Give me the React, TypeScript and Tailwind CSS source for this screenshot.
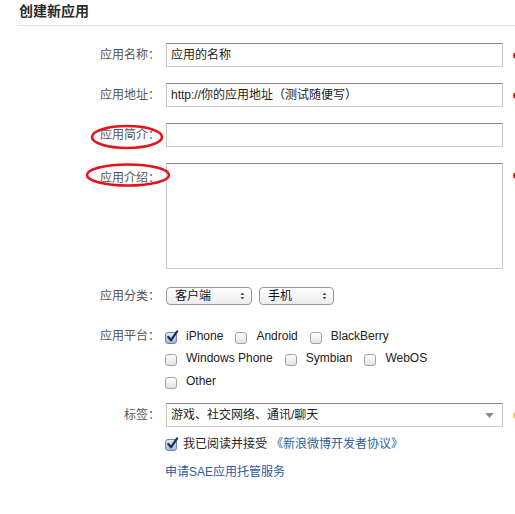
import React from "react";

const font = { fontFamily: '"Liberation Sans", "Noto Sans CJK SC", sans-serif' };

function Box({ checked = false }: { checked?: boolean }) {
  if (checked) {
    return (
      <span className="relative inline-block w-[12px] h-[12px] rounded-[3px] border border-[#6f86a8] bg-gradient-to-b from-[#dfeaf8] to-[#9fb9dc] shrink-0">
        <svg viewBox="0 0 14 14" className="absolute left-[0px] top-[-3px] w-[13px] h-[13px]">
          <path d="M2.5 7.5 L5.5 11 L12 1.5" fill="none" stroke="#1d2f4f" strokeWidth="2.4" strokeLinecap="round" strokeLinejoin="round" />
        </svg>
      </span>
    );
  }
  return (
    <span className="inline-block w-[12px] h-[12px] rounded-[3px] border border-[#a3a3a3] bg-gradient-to-b from-[#ffffff] to-[#e2e2e2] shrink-0" />
  );
}

function Platform({ name, checked = false }: { name: string; checked?: boolean }) {
  return (
    <span className="inline-flex items-center mr-[12px]">
      <span className="mt-[4px] mr-[9px] flex">
        <Box checked={checked} />
      </span>
      <span className="text-[#222]">{name}</span>
    </span>
  );
}

function Marker({ color, className = "" }: { color: string; className?: string }) {
  return <span className={`ml-[10px] w-[8px] h-[7px] rounded-full shrink-0 ${color} ${className}`} />;
}

function Select({ text, width }: { text: string; width: string }) {
  return (
    <div
      className={`flex items-center justify-between h-[18px] ${width} rounded-[4px] border border-[#9a9a9a] bg-gradient-to-b from-[#ffffff] to-[#ececec] pl-[8px] pr-[6px] text-[12px] text-[#111]`}
    >
      <span>{text}</span>
      <svg viewBox="0 0 6 10" className="w-[5px] h-[8px]">
        <path d="M3 0.5 L5.5 3.8 H0.5 Z M3 9.5 L0.5 6.2 H5.5 Z" fill="#555" />
      </svg>
    </div>
  );
}

const inputCls =
  "w-[337px] h-[24px] border border-[#cfcbc2] border-t-[#8a8a8a] bg-white px-[4px] flex items-center text-[12px] text-[#222] shrink-0";

export default function App() {
  return (
    <div className="relative w-[515px] h-[514px] overflow-hidden bg-white text-[12px] text-[#555]" style={font}>
      {/* header */}
      <div className="ml-[17px] h-[26px] border-b border-[#e6e6e6] pl-[2px] pt-[2px]">
        <h2 className="text-[14px] font-semibold text-[#2b2b2b] leading-[18px]">创建新应用</h2>
      </div>

      <div className="flex flex-col">
        <div className="flex items-center mt-[17px]">
          <label className="w-[160px] text-right shrink-0">应用名称：</label>
          <div className={`ml-[6px] ${inputCls}`}>应用的名称</div>
          <Marker color="bg-[#e0161c]" />
        </div>

        <div className="flex items-center mt-[16px]">
          <label className="w-[160px] text-right shrink-0">应用地址：</label>
          <div className={`ml-[6px] ${inputCls}`}>http://你的应用地址（测试随便写）</div>
          <Marker color="bg-[#e0161c]" />
        </div>

        <div className="flex items-center mt-[16px]">
          <label className="w-[160px] text-right shrink-0">应用简介：</label>
          <div className={`ml-[6px] ${inputCls}`} />
        </div>

        <div className="flex items-start mt-[16px]">
          <label className="w-[160px] text-right shrink-0 pt-[6px]">应用介绍：</label>
          <div className="ml-[6px] w-[337px] h-[106px] border border-[#cfcbc2] border-t-[#8a8a8a] bg-white shrink-0" />
          <Marker color="bg-[#e0161c]" className="mt-[9px]" />
        </div>

        <div className="flex items-center mt-[18px]">
          <label className="w-[160px] text-right shrink-0">应用分类：</label>
          <div className="ml-[6px] flex gap-[7px]">
            <Select text="客户端" width="w-[86px]" />
            <Select text="手机" width="w-[75px]" />
          </div>
        </div>

        <div className="flex items-start mt-[20px]">
          <label className="w-[160px] text-right shrink-0 leading-[22px]">应用平台：</label>
          <div className="ml-[5px] w-[342px] shrink-0 flex flex-col leading-[22px]">
            <div className="flex">
              <Platform name="iPhone" checked />
              <Platform name="Android" />
              <Platform name="BlackBerry" />
            </div>
            <div className="flex">
              <Platform name="Windows Phone" />
              <Platform name="Symbian" />
              <Platform name="WebOS" />
            </div>
            <div className="flex mt-[1px]">
              <Platform name="Other" />
            </div>
          </div>
          <Marker color="bg-[#5cb82e]" className="mt-[6px] ml-[6px]" />
        </div>

        <div className="flex items-center mt-[11px]">
          <label className="w-[160px] text-right shrink-0">标签：</label>
          <div className={`ml-[6px] ${inputCls} justify-between`}>
            <span>游戏、社交网络、通讯/聊天</span>
            <svg viewBox="0 0 10 6" className="w-[9px] h-[5px] mr-[4px]">
              <path d="M0 0 H10 L5 6 Z" fill="#8c8c8c" />
            </svg>
          </div>
          <Marker color="bg-[#f0c36a]" className="h-[5px]" />
        </div>

        <div className="flex items-center mt-[8px] ml-[165px]">
          <span className="mt-[2px] flex">
            <Box checked />
          </span>
          <span className="ml-[6px] text-[#222]">我已阅读并接受</span>
          <span className="ml-[4px] text-[#2d5e9c]">《新浪微博开发者协议》</span>
        </div>

        <div className="mt-[10px] ml-[165px] text-[#2d5e9c]">申请SAE应用托管服务</div>
      </div>

      {/* red annotation ellipses */}
      <svg className="absolute left-[89px] top-[123px] w-[76px] h-[28px]" viewBox="0 0 76 28">
        <ellipse cx="38" cy="14" rx="35" ry="11" fill="none" stroke="#e8101a" strokeWidth="2.6" />
      </svg>
      <svg className="absolute left-[84px] top-[161px] w-[88px] h-[28px]" viewBox="0 0 88 28">
        <ellipse cx="44" cy="14" rx="41" ry="10.5" fill="none" stroke="#e8101a" strokeWidth="2.6" />
      </svg>
    </div>
  );
}
